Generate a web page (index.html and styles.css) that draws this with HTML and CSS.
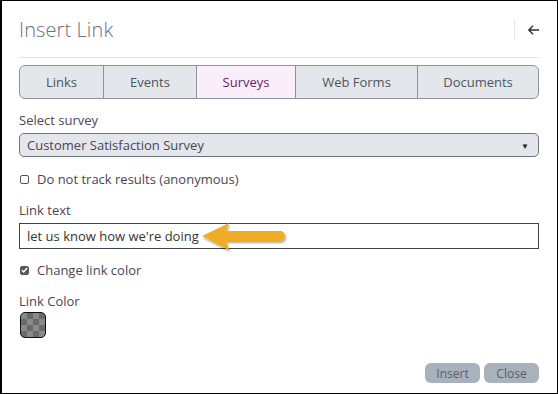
FILE: index.html
```html
<!DOCTYPE html>
<html lang="en">
<head>
    <meta charset="UTF-8">
    <title>Insert Link</title>
    <link rel="stylesheet" href="styles.css">
</head>
<body>
    <div class="dialog">
        <div class="dialog-header">
            <h1 class="dialog-title">Insert Link</h1>
            <button class="back-btn" title="Back">
                <svg width="14" height="12" viewBox="0 0 14 12">
                    <path d="M13 6H2M6.5 1.5L2 6l4.5 4.5" fill="none" stroke="#2b2f36" stroke-width="1.5"/>
                </svg>
            </button>
        </div>

        <div class="tabs">
            <div class="tab tab-links">Links</div>
            <div class="tab tab-events">Events</div>
            <div class="tab tab-surveys active">Surveys</div>
            <div class="tab tab-forms">Web Forms</div>
            <div class="tab tab-docs">Documents</div>
        </div>

        <label class="field-label field-label-first">Select survey</label>
        <div class="select-box">
            <span>Customer Satisfaction Survey</span>
            <span class="caret">&#9660;</span>
        </div>

        <label class="check-row">
            <span class="checkbox"></span>
            Do not track results (anonymous)
        </label>

        <label class="field-label">Link text</label>
        <div class="text-wrap">
            <div class="text-input">let us know how we're doing</div>
            <svg class="pointer" width="92" height="34" viewBox="0 0 92 34">
                <defs>
                    <filter id="sh" x="-10%" y="-20%" width="130%" height="150%">
                        <feDropShadow dx="1" dy="2" stdDeviation="1.2" flood-color="#000" flood-opacity="0.35"/>
                    </filter>
                </defs>
                <g filter="url(#sh)">
                    <polygon points="2,15 29,2 26,10 81,10 81,20 26,20 29,29" fill="#f0ac20"/>
                    <circle cx="80" cy="15" r="5" fill="#f0ac20"/>
                </g>
            </svg>
        </div>

        <label class="check-row check-row-on">
            <span class="checkbox checked">
                <svg width="8" height="8" viewBox="0 0 8 8"><path d="M1 4.2l2 2L7 1.8" fill="none" stroke="#fff" stroke-width="1.6"/></svg>
            </span>
            Change link color
        </label>

        <label class="field-label">Link Color</label>
        <div class="swatch"></div>

        <div class="dialog-footer">
            <button class="btn">Insert</button>
            <button class="btn">Close</button>
        </div>
    </div>
</body>
</html>
```

FILE: styles.css
```css
:root {
    --text-color: #4b4553;
    --tab-bg: #e3e6ea;
    --tab-border: #8d939b;
    --active-bg: #fbeefb;
    --active-text: #6a1f6a;
    --arrow-color: #f0ac20;
}

* {
    box-sizing: border-box;
}

body {
    margin: 0;
    font-family: 'Open Sans', sans-serif;
    font-size: 13px;
    color: var(--text-color);
    background: #fff;
}

.dialog {
    width: 558px;
    height: 394px;
    border: 1px solid #000;
    border-left-width: 2px;
    padding: 0 18px 0 17px;
    display: flex;
    flex-direction: column;
    background: #fff;
}

.dialog-header {
    display: flex;
    align-items: center;
    justify-content: space-between;
    height: 57px;
    border-bottom: 1px solid #e2e4e7;
    padding-top: 1px;
}

.dialog-title {
    margin: 0;
    font-size: 20px;
    font-weight: 300;
    color: #6c7079;
    letter-spacing: 0.1px;
}

.back-btn {
    border: none;
    border-left: 1px solid #e2e4e7;
    background: none;
    height: 20px;
    width: 26px;
    padding: 0 0 0 12px;
    margin-right: -1px;
    display: flex;
    align-items: center;
    cursor: pointer;
}

.tabs {
    display: flex;
    margin-top: 7px;
    height: 34px;
    border: 1.5px solid var(--tab-border);
    border-radius: 6px;
    overflow: hidden;
    background: var(--tab-bg);
}

.tab {
    display: flex;
    align-items: center;
    justify-content: center;
    border-right: 1.5px solid var(--tab-border);
    color: #4d5560;
    font-size: 13px;
}

.tab:last-child {
    border-right: none;
}

.tab-links { width: 84px; }
.tab-events { width: 93px; }
.tab-surveys { width: 99px; }
.tab-forms { width: 122px; }
.tab-docs { flex: 1; }

.tab.active {
    background: var(--active-bg);
    color: var(--active-text);
}

.field-label {
    display: block;
    margin-top: 13px;
    line-height: 18px;
    font-size: 13px;
}

.field-label-first {
    margin-top: 12px;
}

.select-box {
    margin-top: 4px;
    height: 24px;
    border: 1px solid #6b7280;
    border-radius: 5px;
    background: var(--tab-bg);
    display: flex;
    align-items: center;
    justify-content: space-between;
    padding: 0 9px 0 7px;
    font-size: 13px;
}

.caret {
    font-size: 8px;
    color: #222;
}

.check-row {
    display: flex;
    align-items: center;
    gap: 8px;
    margin-top: 13px;
    line-height: 18px;
    font-size: 13px;
}

.checkbox {
    width: 9px;
    height: 9px;
    border: 1px solid #555;
    border-radius: 2px;
    background: #fff;
    display: flex;
    align-items: center;
    justify-content: center;
    margin-left: 1px;
}

.checkbox.checked {
    background: #595959;
    border-color: #595959;
}

.check-row-on {
    margin-top: 12px;
}

.text-wrap {
    position: relative;
    margin-top: 4px;
}

.text-input {
    height: 26px;
    border: 1.5px solid #3e454e;
    display: flex;
    align-items: center;
    padding: 0 7px;
    font-size: 13px;
    color: #333;
}

.pointer {
    position: absolute;
    left: 181px;
    top: -2px;
}

.swatch {
    margin-top: 2px;
    margin-left: 1px;
    width: 26px;
    height: 26px;
    border: 1px solid #111;
    border-radius: 5px;
    background-color: #8a8a8a;
    background-image:
        linear-gradient(45deg, #6a6a6a 25%, transparent 25%, transparent 75%, #6a6a6a 75%),
        linear-gradient(45deg, #6a6a6a 25%, transparent 25%, transparent 75%, #6a6a6a 75%);
    background-size: 12px 12px;
    background-position: 0 0, 6px 6px;
}

.dialog-footer {
    margin-top: auto;
    margin-bottom: 10px;
    display: flex;
    justify-content: flex-end;
    gap: 4px;
}

.btn {
    border: none;
    border-radius: 6px;
    background: #a9b1bc;
    color: #555e68;
    font-family: 'Open Sans', sans-serif;
    font-size: 12px;
    height: 20px;
    width: 55px;
    padding: 0;
}
```
